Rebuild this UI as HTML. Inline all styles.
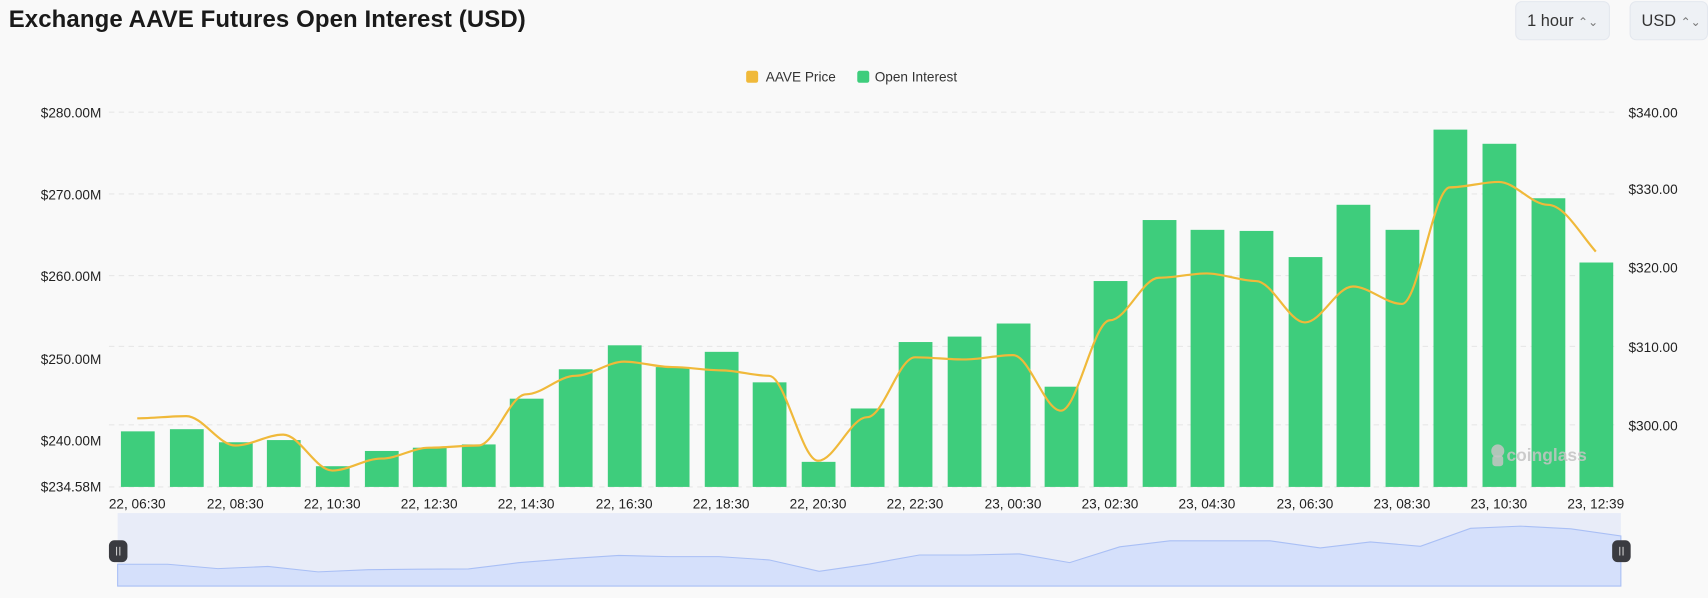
<!DOCTYPE html>
<html><head><meta charset="utf-8"><style>
html,body{margin:0;padding:0;background:#f9f9f9;overflow:hidden;width:1708px;height:598px}
#w{position:absolute;left:0;top:0;width:1568px;height:549px;transform:scale(1.08929);transform-origin:0 0;font-family:"Liberation Sans",sans-serif}
.t{position:absolute;left:8px;top:5px;font-size:22px;font-weight:bold;color:#1a1a1a;letter-spacing:0.1px}
.b{position:absolute;top:1px;height:36px;border:1px solid #e3e7ee;background:#eef1f5;border-radius:6px;font-size:15px;color:#333;line-height:36px;box-sizing:border-box;padding-left:10px}
</style></head><body><div id="w">
<div class="t">Exchange AAVE Futures Open Interest (USD)</div>
<div class="b" style="left:1391px;width:87px">1 hour <span style="font-size:11px;color:#777">&#8963;&#8964;</span></div>
<div class="b" style="left:1496px;width:72px">USD <span style="font-size:11px;color:#777">&#8963;&#8964;</span></div>
<svg width="1568" height="549" style="position:absolute;left:0;top:0" font-family="Liberation Sans,sans-serif">
<rect x="685" y="65" width="11" height="11" rx="2" fill="#f0b93a"/><text x="703" y="75" font-size="12.5" fill="#333">AAVE Price</text>
<rect x="787" y="65" width="11" height="11" rx="2" fill="#3ecd7c"/><text x="803" y="75" font-size="12.5" fill="#333">Open Interest</text>
<g stroke="#e8e8e8" stroke-dasharray="5,4"><line x1="100" x2="1484" y1="103" y2="103"/><line x1="100" x2="1484" y1="178" y2="178"/><line x1="100" x2="1484" y1="253" y2="253"/><line x1="100" x2="1484" y1="318" y2="318"/><line x1="100" x2="1484" y1="390" y2="390"/><line x1="100" x2="1484" y1="447" y2="447"/></g>
<g font-size="12.5" fill="#222" text-anchor="end"><text x="93" y="108">$280.00M</text><text x="93" y="183">$270.00M</text><text x="93" y="258">$260.00M</text><text x="93" y="334">$250.00M</text><text x="93" y="409">$240.00M</text><text x="93" y="451">$234.58M</text></g>
<g font-size="12.5" fill="#222"><text x="1495" y="108">$340.00</text><text x="1495" y="178">$330.00</text><text x="1495" y="250">$320.00</text><text x="1495" y="323">$310.00</text><text x="1495" y="395">$300.00</text></g>
<g fill="#3ecd7c">
<rect x="111" y="396" width="31" height="51"/><rect x="156" y="394" width="31" height="53"/><rect x="201" y="406" width="31" height="41"/><rect x="245" y="404" width="31" height="43"/><rect x="290" y="428" width="31" height="19"/><rect x="335" y="414" width="31" height="33"/><rect x="379" y="411" width="31" height="36"/><rect x="424" y="408" width="31" height="39"/><rect x="468" y="366" width="31" height="81"/><rect x="513" y="339" width="31" height="108"/><rect x="558" y="317" width="31" height="130"/><rect x="602" y="337" width="31" height="110"/><rect x="647" y="323" width="31" height="124"/><rect x="691" y="351" width="31" height="96"/><rect x="736" y="424" width="31" height="23"/><rect x="781" y="375" width="31" height="72"/><rect x="825" y="314" width="31" height="133"/><rect x="870" y="309" width="31" height="138"/><rect x="915" y="297" width="31" height="150"/><rect x="959" y="355" width="31" height="92"/><rect x="1004" y="258" width="31" height="189"/><rect x="1049" y="202" width="31" height="245"/><rect x="1093" y="211" width="31" height="236"/><rect x="1138" y="212" width="31" height="235"/><rect x="1183" y="236" width="31" height="211"/><rect x="1227" y="188" width="31" height="259"/><rect x="1272" y="211" width="31" height="236"/><rect x="1316" y="119" width="31" height="328"/><rect x="1361" y="132" width="31" height="315"/><rect x="1406" y="182" width="31" height="265"/><rect x="1450" y="241" width="31" height="206"/>
</g>
<path fill="none" stroke="#f0b93a" stroke-width="2" d="M126 384 C141 384 156 382 171 382 C186 382 201 409 216 409 C231 409 245 399 260 399 C275 399 290 432 305 432 C320 432 335 421 350 421 C365 421 379 411 394 411 C409 411 424 409 439 409 C454 409 468 362 483 362 C498 362 513 345 528 345 C543 345 558 332 573 332 C588 332 602 337 617 337 C632 337 647 340 662 340 C677 340 691 345 706 345 C721 345 736 423 751 423 C766 423 781 383 796 383 C811 383 825 328 840 328 C855 328 870 330 885 330 C900 330 915 326 930 326 C945 326 959 377 974 377 C989 377 1004 294 1019 294 C1034 294 1049 255 1064 255 C1079 255 1093 251 1108 251 C1123 251 1138 258 1153 258 C1168 258 1183 296 1198 296 C1213 296 1227 263 1242 263 C1257 263 1272 279 1287 279 C1302 279 1316 172 1331 172 C1346 172 1361 167 1376 167 C1391 167 1406 188 1421 188 C1436 188 1450 214 1465 231"/>
<text x="1383" y="423" font-size="16" font-weight="bold" fill="#c4c4c4" opacity="0.85">coinglass</text>
<circle cx="1375" cy="414" r="6" fill="#c4c4c4" opacity="0.85"/><rect x="1370" y="418" width="10" height="10" rx="3" fill="#c4c4c4" opacity="0.85"/>
<g font-size="12.5" fill="#222" text-anchor="middle"><text x="126" y="467">22, 06:30</text><text x="216" y="467">22, 08:30</text><text x="305" y="467">22, 10:30</text><text x="394" y="467">22, 12:30</text><text x="483" y="467">22, 14:30</text><text x="573" y="467">22, 16:30</text><text x="662" y="467">22, 18:30</text><text x="751" y="467">22, 20:30</text><text x="840" y="467">22, 22:30</text><text x="930" y="467">23, 00:30</text><text x="1019" y="467">23, 02:30</text><text x="1108" y="467">23, 04:30</text><text x="1198" y="467">23, 06:30</text><text x="1287" y="467">23, 08:30</text><text x="1376" y="467">23, 10:30</text><text x="1465" y="467">23, 12:39</text></g>
<rect x="108" y="471" width="1380" height="67" fill="#e8ecf8"/>
<path fill="#d5e0fb" stroke="#a9bff5" stroke-width="1" d="M108 518 L154 518 L200 522 L246 520 L292 525 L338 523 L384 522.5 L430 522.3 L476 516.6 L522 512.9 L568 509.9 L614 511 L660 511 L706 514 L752 524.5 L798 517.8 L844 509.5 L890 509.5 L936 508.5 L982 516.5 L1028 502 L1074 496.5 L1120 496.5 L1166 496.5 L1212 503 L1258 497.5 L1304 501.5 L1350 485 L1396 483 L1442 485.5 L1488 492 L1488 538 L108 538 Z"/>
<rect x="100" y="496" width="17" height="20" rx="5" fill="#3a3b40"/><line x1="107" y1="502" x2="107" y2="510" stroke="#ccc"/><line x1="110" y1="502" x2="110" y2="510" stroke="#ccc"/>
<rect x="1480" y="496" width="17" height="20" rx="5" fill="#3a3b40"/><line x1="1487" y1="502" x2="1487" y2="510" stroke="#ccc"/><line x1="1490" y1="502" x2="1490" y2="510" stroke="#ccc"/>
</svg>
</div></body></html>
